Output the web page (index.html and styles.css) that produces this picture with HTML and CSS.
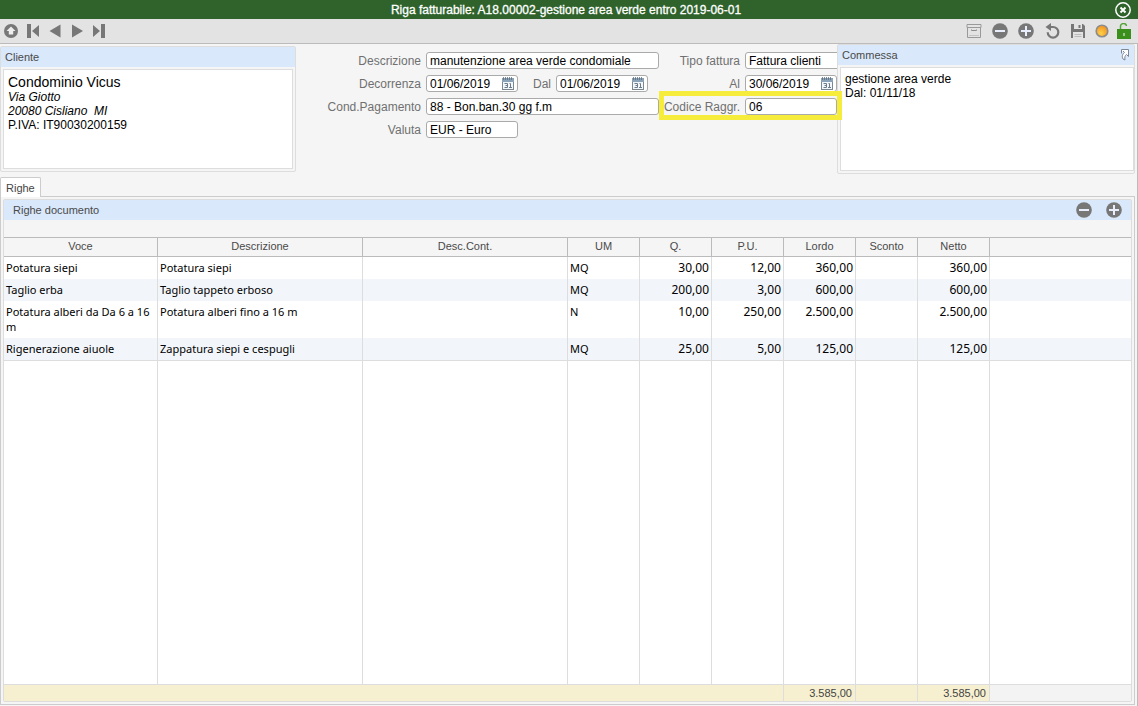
FILE: index.html
```html
<!DOCTYPE html>
<html lang="it">
<head>
    <meta charset="UTF-8">
    <meta name="viewport" content="width=device-width, initial-scale=1.0">
    <title>Riga fatturabile</title>
    <link rel="stylesheet" href="styles.css">
</head>
<body>
    <!-- shared icons -->
    <svg class="sprite" width="0" height="0" aria-hidden="true">
        <symbol id="icon-minus" viewBox="0 0 16 16">
            <circle cx="8" cy="8" r="7.8" fill="#777"/>
            <rect x="3" y="7" width="10" height="2" fill="#e8eefb"/>
        </symbol>
        <symbol id="icon-plus" viewBox="0 0 16 16">
            <circle cx="8" cy="8" r="7.8" fill="#777"/>
            <path d="M7 3h2v4h4v2H9v4H7V9H3V7h4z" fill="#e8eefb"/>
        </symbol>
        <symbol id="icon-calendar" viewBox="0 0 12 13">
            <rect x="0.5" y="2.5" width="11" height="10" fill="#f4f7fa" stroke="#7b8894"/>
            <rect x="0" y="1" width="12" height="4" fill="#8ba3b8"/>
            <path d="M1.5 0v3M3.5 0v3M5.5 0v3M7.5 0v3M9.5 0v3" stroke="#5f6f7d" stroke-width="0.8"/>
            <path d="M2.500 6.500h3v4h-3M3.500 8.500h2M7.500 6.500h1v4M7 10.500h3" stroke="#6b7b8c" fill="none"/>
        </symbol>
    </svg>

    <div class="titlebar">
        <h1>Riga fatturabile: A18.00002-gestione area verde entro 2019-06-01</h1>
        <button class="close" aria-label="Chiudi">
            <svg width="16" height="16" viewBox="0 0 16 16" fill="none" stroke="#fff">
                <circle cx="8" cy="8" r="7.2" stroke-width="1.5"/>
                <path d="M5.500 5.500l5 5M10.500 5.500l-5 5" stroke-width="2"/>
            </svg>
        </button>
    </div>

    <div class="toolbar">
        <div class="tools tools-nav">
            <button aria-label="Su">
                <svg width="14" height="14" viewBox="0 0 14 14">
                    <circle cx="7" cy="7" r="7" fill="#777"/>
                    <path d="M7 2.500l4.500 4.500H9.200v3.500H4.800V7H2.500z" fill="#eee"/>
                </svg>
            </button>
            <button aria-label="Primo">
                <svg width="12" height="14" viewBox="0 0 12 14" fill="#777"><path d="M0 0h4v14H0zM12 1v12L5 7z"/></svg>
            </button>
            <button aria-label="Precedente">
                <svg width="12" height="14" viewBox="0 0 12 14" fill="#777"><path d="M11.500 0.500v13L0.500 7z"/></svg>
            </button>
            <button aria-label="Successivo">
                <svg width="12" height="14" viewBox="0 0 12 14" fill="#777"><path d="M1 0.500v13L12 7z"/></svg>
            </button>
            <button aria-label="Ultimo">
                <svg width="12" height="14" viewBox="0 0 12 14" fill="#777"><path d="M12 0H8v14h4zM0 1v12l7-6z"/></svg>
            </button>
        </div>
        <div class="tools tools-actions">
            <button aria-label="Archivia">
                <svg width="16" height="14" viewBox="0 0 16 14" fill="none" stroke="#8c8c8c">
                    <path d="M1 0.500h14v3H1zM1.500 3.500v10h13v-10" stroke="#999"/>
                    <path d="M5.500 5.500v1h5v-1"/>
                    <path d="M3 11.500h10" stroke="#c4c4c4"/>
                </svg>
            </button>
            <button aria-label="Elimina"><svg width="16" height="16"><use href="#icon-minus"/></svg></button>
            <button aria-label="Aggiungi"><svg width="16" height="16"><use href="#icon-plus"/></svg></button>
            <button aria-label="Annulla">
                <svg width="16" height="16" viewBox="0 0 16 16">
                    <path d="M6 4h3a5.300 5.300 0 1 1-5.300 5.300" fill="none" stroke="#777" stroke-width="2.2"/>
                    <path d="M1.500 4L7 0v8z" fill="#777"/>
                </svg>
            </button>
            <button aria-label="Salva">
                <svg width="14" height="14" viewBox="0 0 14 14">
                    <path d="M0 0h12l2 2v12H0z" fill="#777"/>
                    <path d="M3 0h8v5H3zM2 8h10v6H2z" fill="#e4e4e4"/>
                    <path d="M7.500 1h2v3h-2z" fill="#777"/>
                    <path d="M3.500 10.500h7M3.500 12.500h7" stroke="#bbb"/>
                </svg>
            </button>
            <button class="small" aria-label="Stato">
                <svg width="14" height="14" viewBox="0 0 14 14">
                    <defs>
                        <radialGradient id="amber" cx="0.4" cy="0.7" r="0.6">
                            <stop offset="0" stop-color="#ffd24a"/>
                            <stop offset="1" stop-color="#f39a24"/>
                        </radialGradient>
                    </defs>
                    <circle cx="7" cy="7" r="5.8" fill="url(#amber)" stroke="#8c8c8c" stroke-width="1.6"/>
                </svg>
            </button>
            <button class="small" aria-label="Sblocca">
                <svg width="14" height="16" viewBox="0 0 14 16">
                    <rect x="0" y="6" width="14" height="10" fill="#3a8f1d"/>
                    <path d="M3.500 6V3.500a3 2.700 0 0 1 6-0.500" fill="none" stroke="#55a53a" stroke-width="1.5"/>
                    <rect x="6.500" y="10" width="1" height="3" fill="#fff"/>
                </svg>
            </button>
        </div>
    </div>

    <main>
        <div class="top">
            <section class="panel cliente">
                <h2>Cliente</h2>
                <div class="panel-body">
                    <p class="name">Condominio Vicus</p>
                    <p><em>Via Giotto</em></p>
                    <p><em>20080 Cisliano&nbsp; MI</em></p>
                    <p>P.IVA: IT90030200159</p>
                </div>
            </section>

            <form class="dati">
                <label for="descrizione">Descrizione</label>
                <input class="wide" type="text" id="descrizione" value="manutenzione area verde condomiale">
                <label for="tipo">Tipo fattura</label>
                <input class="under" type="text" id="tipo" value="Fattura clienti">

                <label for="decorrenza">Decorrenza</label>
                <div class="date">
                    <input type="text" id="decorrenza" value="01/06/2019">
                    <button type="button" aria-label="Calendario"><svg width="12" height="13"><use href="#icon-calendar"/></svg></button>
                </div>
                <label for="dal">Dal</label>
                <div class="date">
                    <input type="text" id="dal" value="01/06/2019">
                    <button type="button" aria-label="Calendario"><svg width="12" height="13"><use href="#icon-calendar"/></svg></button>
                </div>
                <label class="al" for="al">Al</label>
                <div class="date">
                    <input type="text" id="al" value="30/06/2019">
                    <button type="button" aria-label="Calendario"><svg width="12" height="13"><use href="#icon-calendar"/></svg></button>
                </div>

                <label for="pagamento">Cond.Pagamento</label>
                <input class="wide" type="text" id="pagamento" value="88 - Bon.ban.30 gg f.m">
                <div class="highlight">
                    <label for="codice">Codice Raggr.</label>
                    <input type="text" id="codice" value="06">
                </div>

                <label for="valuta">Valuta</label>
                <input type="text" id="valuta" value="EUR - Euro">
            </form>

            <section class="panel commessa">
                <h2>Commessa
                    <button aria-label="Apri commessa">
                        <svg width="10" height="12" viewBox="0 0 10 12" fill="none" stroke="#7d8794">
                            <path d="M1.500 4.500v-4h7v7L6.500 5.500C5 6.500 4.500 8 5 11L3 10C1.500 7.500 2.500 5 4.500 3.500L3 2" fill="#fff"/>
                        </svg>
                    </button>
                </h2>
                <div class="panel-body">
                    <p>gestione area verde</p>
                    <p>Dal: 01/11/18</p>
                </div>
            </section>
        </div>

        <div class="tabs">
            <button class="tab">Righe</button>
        </div>
        <div class="tab-content">
            <section class="panel righe">
                <h2>Righe documento
                    <span class="grid-tools">
                        <button aria-label="Elimina riga"><svg width="16" height="16"><use href="#icon-minus"/></svg></button>
                        <button aria-label="Aggiungi riga"><svg width="16" height="16"><use href="#icon-plus"/></svg></button>
                    </span>
                </h2>
                <table>
                    <colgroup>
                        <col class="c-voce">
                        <col class="c-desc">
                        <col class="c-desc">
                        <col class="c-num">
                        <col class="c-num">
                        <col class="c-num">
                        <col class="c-num">
                        <col class="c-sconto">
                        <col class="c-num">
                        <col>
                    </colgroup>
                    <thead>
                        <tr>
                            <th>Voce</th><th>Descrizione</th><th>Desc.Cont.</th><th>UM</th><th>Q.</th>
                            <th>P.U.</th><th>Lordo</th><th>Sconto</th><th>Netto</th><th></th>
                        </tr>
                    </thead>
                    <tbody>
                        <tr>
                            <td>Potatura siepi</td><td>Potatura siepi</td><td></td><td>MQ</td>
                            <td class="num">30,00</td><td class="num">12,00</td><td class="num">360,00</td>
                            <td></td><td class="num">360,00</td><td></td>
                        </tr>
                        <tr>
                            <td>Taglio erba</td><td>Taglio tappeto erboso</td><td></td><td>MQ</td>
                            <td class="num">200,00</td><td class="num">3,00</td><td class="num">600,00</td>
                            <td></td><td class="num">600,00</td><td></td>
                        </tr>
                        <tr>
                            <td>Potatura alberi da Da 6 a 16 m</td><td>Potatura alberi fino a 16 m</td><td></td><td>N</td>
                            <td class="num">10,00</td><td class="num">250,00</td><td class="num">2.500,00</td>
                            <td></td><td class="num">2.500,00</td><td></td>
                        </tr>
                        <tr>
                            <td>Rigenerazione aiuole</td><td>Zappatura siepi e cespugli</td><td></td><td>MQ</td>
                            <td class="num">25,00</td><td class="num">5,00</td><td class="num">125,00</td>
                            <td></td><td class="num">125,00</td><td></td>
                        </tr>
                        <tr class="filler">
                            <td></td><td></td><td></td><td></td><td></td>
                            <td></td><td></td><td></td><td></td><td></td>
                        </tr>
                    </tbody>
                    <tfoot>
                        <tr>
                            <td colspan="6"></td><td>3.585,00</td><td></td><td>3.585,00</td><td></td>
                        </tr>
                    </tfoot>
                </table>
            </section>
        </div>
    </main>
</body>
</html>
```

FILE: styles.css
```css
* {
    box-sizing: border-box;
}
body {
    margin: 0;
    min-height: 100vh;
    display: flex;
    flex-direction: column;
    font-family: "Liberation Sans", Arial, sans-serif;
    font-size: 12px;
    background-color: #f5f5f5;
    color: #000;
}
h1, h2, p {
    margin: 0;
    font-weight: normal;
}
button {
    display: flex;
    align-items: center;
    justify-content: center;
    padding: 0;
    border: none;
    background: none;
    font-family: inherit;
    cursor: pointer;
}
.sprite {
    position: absolute;
}

/* title and toolbar */
.titlebar {
    display: grid;
    grid-template-columns: 24px 1fr 30px;
    height: 19px;
    background-color: #2f632b;
    color: #fff;
}
.titlebar h1 {
    grid-column: 2;
    font-size: 12px;
    line-height: 20px;
    text-align: center;
    -webkit-text-stroke: 0.3px #fff;
}
.toolbar {
    display: flex;
    justify-content: space-between;
    height: 25px;
    padding-right: 3px;
    background-color: #e3e3e3;
    border-bottom: 1px solid #bbb;
}
.tools {
    display: flex;
}
.tools button {
    width: 26px;
}
.tools-nav button,
.tools .small {
    width: 22px;
}

main {
    flex: 1;
    display: flex;
    flex-direction: column;
    padding: 0 2px 1px 0;
    border-right: 1px solid #bbb;
}
.top {
    display: grid;
    grid-template-columns: 296px 1fr 298px;
    height: 130px;
}

/* panels */
.panel {
    display: flex;
    flex-direction: column;
    border: 1px solid #ddd;
    border-radius: 2px;
    background-color: #f5f5f5;
}
.panel h2 {
    display: flex;
    justify-content: space-between;
    align-items: center;
    height: 20px;
    padding: 0 4px;
    background-color: #d9e8fb;
    color: #4a4a4a;
    font-size: 11px;
}
.panel-body {
    flex: 1;
    margin: 2px;
    padding: 4px;
    border: 1px solid #ddd;
    background-color: #fff;
    line-height: 14px;
}
.panel-body .name {
    font-size: 14px;
    line-height: 16px;
}
.cliente {
    margin: 2px 0;
}
.commessa .panel-body {
    margin-right: 0;
}

/* form */
.dati {
    display: grid;
    grid-template-columns: 1fr 92px 38px 92px 11px 86px 92px;
    grid-auto-rows: 17px;
    row-gap: 6px;
    padding-top: 8px;
}
.dati label {
    padding-right: 5px;
    line-height: 19px;
    text-align: right;
    white-space: nowrap;
    color: #707070;
}
.dati input {
    width: 100%;
    height: 17px;
    padding: 0 3px;
    border: 1px solid #aaa;
    border-radius: 3px;
    background-color: #fff;
    font-family: inherit;
    font-size: 12px;
    color: #000;
}
.dati .wide {
    grid-column: span 4;
}
.dati .under {
    width: 100px;
}
.dati .al {
    grid-column: span 2;
}
.date {
    position: relative;
}
.date button {
    position: absolute;
    top: 2px;
    right: 4px;
}
.highlight {
    grid-column: span 2;
    display: grid;
    grid-template-columns: 86px 92px;
    position: relative;
}
.highlight::after {
    content: "";
    position: absolute;
    z-index: 1;
    inset: -7px -5px -5px 0;
    border: 5px solid #f5ec3c;
    pointer-events: none;
}

/* tabs */
.tabs {
    display: flex;
    padding-top: 3px;
}
.tab {
    height: 20px;
    margin-bottom: -1px;
    padding: 0 5px;
    border: 1px solid #ccc;
    border-bottom: none;
    border-radius: 2px 2px 0 0;
    background-color: #fff;
    color: #444;
    font-size: 11px;
    position: relative;
}
.tab-content {
    flex: 1;
    display: flex;
    padding: 2px;
    border: 1px solid #ccc;
}
.righe {
    flex: 1;
}
.righe h2 {
    padding: 0 2px 0 9px;
    margin-bottom: 17px;
}
.grid-tools {
    display: flex;
}
.grid-tools button {
    width: 30px;
}

/* rows */
table {
    flex: 1;
    width: 100%;
    table-layout: fixed;
    border-spacing: 0;
    background-color: #fff;
}
.c-voce { width: 154px; }
.c-desc { width: 205px; }
.c-num { width: 72px; }
.c-sconto { width: 62px; }
th {
    height: 20px;
    padding: 0 0 2px;
    border-top: 1px solid #bbb;
    border-bottom: 1px solid #bbb;
    border-right: 1px solid #bbb;
    background-color: #f5f5f5;
    color: #4a4a4a;
    font-size: 11px;
    font-weight: normal;
}
td {
    padding: 3px 2px 4px;
    border-right: 1px solid #ddd;
    font-family: "Noto Sans", sans-serif;
    font-size: 11px;
    line-height: 15px;
    vertical-align: top;
}
th:last-child,
td:last-child {
    border-right: none;
}
tbody tr {
    height: 22px;
}
tbody tr:nth-child(even) td {
    background-color: #f2f6fb;
}
.num {
    font-size: 12px;
    text-align: right;
}
.filler {
    height: 100%;
}
.filler td {
    border-top: 1px solid #ddd;
}
tfoot td {
    height: 17px;
    padding: 1px 3px 0;
    border-top: 1px solid #ddd;
    background-color: #f6f0d0;
    color: #444;
    font-family: inherit;
    font-size: 11px;
    text-align: right;
}
tfoot td:last-child {
    background-color: #f3f3f3;
}
```
